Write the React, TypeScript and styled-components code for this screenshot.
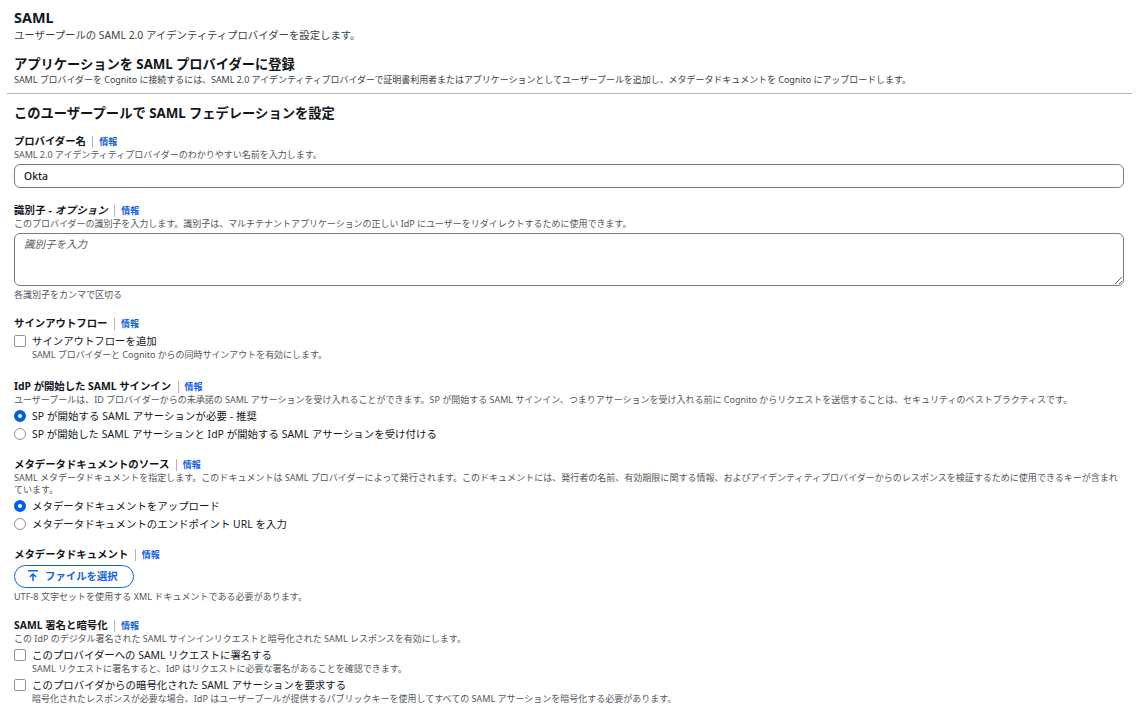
import React from "react";
import styled, { createGlobalStyle } from "styled-components";

const TEXT = "#12161b";
const TEXT_SUB = "#3c3f45";
const TEXT_HINT = "#54565b";
const LINK = "#1262dc";
const ACCENT = "#0460e2";
const BORDER = "#7b7b80";

const GlobalStyle = createGlobalStyle`
  * {
    box-sizing: border-box;
  }

  body {
    margin: 0;
    background: #fff;
    color: ${TEXT};
    font-family: "Noto Sans", "Noto Sans CJK JP", sans-serif;
    overflow: hidden;
  }
`;

const Page = styled.main`
  display: flex;
  flex-direction: column;
  width: 1136px;
  height: 717px;
  padding: 9px 12px 0 14px;
`;

const Title = styled.h2<{ $size?: number; $spacing?: number }>`
  margin: 0;
  font-size: ${({ $size = 13.3 }) => $size}px;
  font-weight: 700;
  line-height: 18px;
  letter-spacing: ${({ $spacing = 0 }) => $spacing}px;
  white-space: nowrap;
`;

const Subtitle = styled.p`
  margin: 1px 0 12px;
  color: ${TEXT_SUB};
  font-size: 10.4px;
  line-height: 15px;
  letter-spacing: -0.02px;
`;

const Intro = styled.p`
  margin: 1px 0 7px;
  color: ${TEXT_SUB};
  font-size: 9px;
  line-height: 12px;
  letter-spacing: -0.05px;
  white-space: nowrap;
`;

const Divider = styled.hr`
  width: 1125px;
  height: 1px;
  margin: 0 0 10px -7px;
  border: 0;
  background: #b4b4b8;
`;

const Form = styled.form`
  display: flex;
  flex-direction: column;
  gap: 15px;
  margin-top: 12px;
`;

const Field = styled.section`
  display: flex;
  flex-direction: column;
  align-items: flex-start;
`;

const LabelRow = styled.div`
  display: flex;
  align-items: center;
  height: 15px;
`;

const Label = styled.span<{ $spacing: number }>`
  font-size: 10.4px;
  font-weight: 700;
  line-height: 15px;
  letter-spacing: ${({ $spacing }) => $spacing}px;
  white-space: nowrap;
`;

const InfoLink = styled.a`
  margin-left: 6.5px;
  padding-left: 6px;
  border-left: 1px solid #b4b4bb;
  color: ${LINK};
  font-size: 9px;
  font-weight: 700;
  line-height: 12px;
`;

const Hint = styled.p<{ $spacing?: number }>`
  margin: 0;
  color: ${TEXT_HINT};
  font-size: 9px;
  line-height: 12px;
  letter-spacing: ${({ $spacing = 0 }) => $spacing}px;
`;

const Control = styled.div<{ $extra?: number }>`
  display: flex;
  flex-direction: column;
  gap: 3px;
  width: 100%;
  margin-top: 3px;
  padding-bottom: ${({ $extra = 0 }) => $extra}px;
`;

const TextInput = styled.input`
  width: 1110px;
  height: 24px;
  padding: 0 9px;
  border: 1px solid ${BORDER};
  border-radius: 6px;
  outline: none;
  color: ${TEXT};
  font: 500 10.4px "Noto Sans", "Noto Sans CJK JP", sans-serif;
`;

const TextArea = styled.textarea`
  display: block;
  width: 1110px;
  height: 53px;
  padding: 3px 9px 2px;
  border: 1px solid ${BORDER};
  border-radius: 6px;
  outline: none;
  font: 400 10.5px/15px "Noto Sans", "Noto Sans CJK JP", sans-serif;

  &::placeholder {
    color: ${TEXT_HINT};
    font-style: italic;
  }
`;

const ChoiceRow = styled.label`
  display: grid;
  grid-template-columns: 12px 1fr;
  column-gap: 6px;
`;

const ChoiceText = styled.div<{ $spacing: number }>`
  font-size: 10.4px;
  line-height: 15px;
  letter-spacing: ${({ $spacing }) => $spacing}px;
  white-space: nowrap;
`;

const Box = styled.input<{ $round?: boolean }>`
  appearance: none;
  width: 12px;
  height: 12px;
  margin: 1px 0 0;
  border: 1px solid #929297;
  border-radius: ${({ $round }) => ($round ? "50%" : "2px")};
  background: #fff;

  &:checked {
    border: 4px solid ${ACCENT};
  }
`;

const FileButton = styled.button`
  display: flex;
  align-items: center;
  gap: 6px;
  width: 120px;
  height: 23px;
  margin: 3px 0;
  padding: 0 0 0 12px;
  border: 1px solid ${LINK};
  border-radius: 12px;
  background: #fff;
  color: ${LINK};
  font: 700 10.4px/15px "Noto Sans", "Noto Sans CJK JP", sans-serif;

  > svg {
    margin-bottom: 1px;
  }
`;

const UploadIcon = () => (
  <svg width="12" height="12" viewBox="0 0 12 12" fill="none" stroke="currentColor" strokeWidth="1.5">
    <path d="M1 .75h10M6 11V4M2.9 6.9 6 4l3.1 2.9" />
  </svg>
);

const FieldLabel = ({ spacing = 0, children }: { spacing?: number; children: React.ReactNode }) => (
  <LabelRow>
    <Label $spacing={spacing}>{children}</Label>
    <InfoLink>情報</InfoLink>
  </LabelRow>
);

type ChoiceProps = {
  type: "checkbox" | "radio";
  name?: string;
  text: string;
  hint?: string;
  checked?: boolean;
  spacing?: number;
  hintSpacing?: number;
};

const Choice = ({ type, name, text, hint, checked, spacing = 0.05, hintSpacing }: ChoiceProps) => (
  <ChoiceRow>
    <Box type={type} name={name} defaultChecked={checked} $round={type === "radio"} />
    <div>
      <ChoiceText $spacing={spacing}>{text}</ChoiceText>
      {hint && <Hint $spacing={hintSpacing}>{hint}</Hint>}
    </div>
  </ChoiceRow>
);

const App = () => (
  <>
    <GlobalStyle />
    <Page>
      <Title $size={14.4}>SAML</Title>
      <Subtitle>ユーザープールの SAML 2.0 アイデンティティプロバイダーを設定します。</Subtitle>
      <Title $spacing={-0.05}>アプリケーションを SAML プロバイダーに登録</Title>
      <Intro>
        SAML プロバイダーを Cognito に接続するには、SAML 2.0 アイデンティティプロバイダーで証明書利用者またはアプリケーションとしてユーザープールを追加し、メタデータドキュメントを Cognito にアップロードします。
      </Intro>
      <Divider />
      <Title $spacing={-0.02}>このユーザープールで SAML フェデレーションを設定</Title>
      <Form>
        <Field>
          <FieldLabel spacing={-0.08}>プロバイダー名</FieldLabel>
          <Hint $spacing={-0.01}>SAML 2.0 アイデンティティプロバイダーのわかりやすい名前を入力します。</Hint>
          <Control>
            <TextInput defaultValue="Okta" />
          </Control>
        </Field>
        <Field>
          <FieldLabel spacing={0.18}>
            識別子 - <i>オプション</i>
          </FieldLabel>
          <Hint $spacing={-0.025}>
            このプロバイダーの識別子を入力します。識別子は、マルチテナントアプリケーションの正しい IdP にユーザーをリダイレクトするために使用できます。
          </Hint>
          <Control>
            <TextArea placeholder="識別子を入力" />
            <Hint>各識別子をカンマで区切る</Hint>
          </Control>
        </Field>
        <Field>
          <FieldLabel>サインアウトフロー</FieldLabel>
          <Control $extra={3}>
            <Choice
              type="checkbox"
              text="サインアウトフローを追加"
              hint="SAML プロバイダーと Cognito からの同時サインアウトを有効にします。"
              spacing={0}
              hintSpacing={-0.04}
            />
          </Control>
        </Field>
        <Field>
          <FieldLabel spacing={-0.03}>IdP が開始した SAML サインイン</FieldLabel>
          <Hint $spacing={-0.01}>
            ユーザープールは、ID プロバイダーからの未承諾の SAML アサーションを受け入れることができます。SP が開始する SAML サインイン、つまりアサーションを受け入れる前に Cognito からリクエストを送信することは、セキュリティのベストプラクティスです。
          </Hint>
          <Control>
            <Choice type="radio" name="signin" text="SP が開始する SAML アサーションが必要 - 推奨" spacing={0.1} checked />
            <Choice type="radio" name="signin" text="SP が開始した SAML アサーションと IdP が開始する SAML アサーションを受け付ける" />
          </Control>
        </Field>
        <Field>
          <FieldLabel>メタデータドキュメントのソース</FieldLabel>
          <Hint $spacing={0.014}>
            SAML メタデータドキュメントを指定します。このドキュメントは SAML プロバイダーによって発行されます。このドキュメントには、発行者の名前、有効期限に関する情報、およびアイデンティティプロバイダーからのレスポンスを検証するために使用できるキーが含まれ
            <br />
            ています。
          </Hint>
          <Control>
            <Choice type="radio" name="source" text="メタデータドキュメントをアップロード" checked />
            <Choice type="radio" name="source" text="メタデータドキュメントのエンドポイント URL を入力" />
          </Control>
        </Field>
        <Field>
          <FieldLabel>メタデータドキュメント</FieldLabel>
          <FileButton type="button">
            <UploadIcon />
            ファイルを選択
          </FileButton>
          <Hint $spacing={0.04}>UTF-8 文字セットを使用する XML ドキュメントである必要があります。</Hint>
        </Field>
        <Field>
          <FieldLabel>SAML 署名と暗号化</FieldLabel>
          <Hint>この IdP のデジタル署名された SAML サインインリクエストと暗号化された SAML レスポンスを有効にします。</Hint>
          <Control>
            <Choice
              type="checkbox"
              text="このプロバイダーへの SAML リクエストに署名する"
              hint="SAML リクエストに署名すると、IdP はリクエストに必要な署名があることを確認できます。"
              spacing={0}
              hintSpacing={0.02}
            />
            <Choice
              type="checkbox"
              text="このプロバイダからの暗号化された SAML アサーションを要求する"
              hint="暗号化されたレスポンスが必要な場合、IdP はユーザープールが提供するパブリックキーを使用してすべての SAML アサーションを暗号化する必要があります。"
            />
          </Control>
        </Field>
      </Form>
    </Page>
  </>
);

export default App;
